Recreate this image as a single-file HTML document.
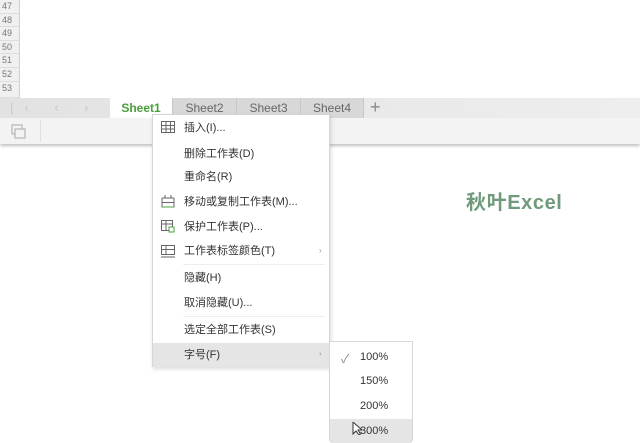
<!DOCTYPE html>
<html><head><meta charset="utf-8"><style>
body{margin:0;width:640px;height:435px;position:relative;overflow:hidden;background:#fff;font-family:"Liberation Sans","Microsoft YaHei","Noto Sans CJK SC",sans-serif;}
.rh{position:absolute;left:0;width:20px;height:13.6px;background:#f0f0f0;border-bottom:1px solid #ddd;border-right:1px solid #cfcfcf;font-size:9px;color:#777;line-height:13px;padding-left:2px;box-sizing:border-box}
.tabbar{position:absolute;left:0;top:98px;width:640px;height:20px;background:linear-gradient(to right,#e2e2e2,#eeeeee)}
.tab{position:absolute;top:98px;height:20px;font-size:12px;line-height:20px;text-align:center;color:#666;background:#d8d8d8;border-left:1px solid #c8c8c8;box-sizing:border-box}
.tool{position:absolute;left:0;top:118px;width:640px;height:26px;background:#f3f3f3;box-shadow:0 2px 3px rgba(0,0,0,.25)}
.menu{position:absolute;left:152px;top:114px;width:178px;height:253px;background:#fff;border:1px solid #d6d6d6;box-shadow:1px 2px 4px rgba(0,0,0,.15);box-sizing:border-box}
.it{position:absolute;left:0;width:176px;height:24px;font-size:11px;line-height:24px;color:#333;padding-left:31px;box-sizing:border-box;font-family:"Liberation Sans","Noto Sans CJK SC",sans-serif}
.sep{position:absolute;left:30px;right:4px;height:1px;background:#eee}
.sub{position:absolute;left:329px;top:341px;width:84px;height:100px;background:#fff;border:1px solid #d6d6d6;box-sizing:border-box}
.si{position:absolute;left:0;width:82px;height:24px;font-size:11px;line-height:24px;color:#333;padding-left:30px;box-sizing:border-box}
</style></head><body>
<div class="rh" style="top:0">47</div>
<div class="rh" style="top:13.6px">48</div>
<div class="rh" style="top:27.2px">49</div>
<div class="rh" style="top:40.8px">50</div>
<div class="rh" style="top:54.4px">51</div>
<div class="rh" style="top:68px">52</div>
<div class="rh" style="top:81.6px;height:16.4px">53</div>
<div class="tool"></div>
<svg style="position:absolute;left:10px;top:124px" width="18" height="16" viewBox="0 0 18 16"><rect x="2" y="1" width="10" height="9" fill="none" stroke="#aaa"/><rect x="5" y="5" width="10" height="9" fill="#f3f3f3" stroke="#aaa"/></svg>
<div style="position:absolute;left:40px;top:120px;width:1px;height:22px;background:#e0e0e0"></div>
<div class="tabbar"></div>
<div style="position:absolute;left:10px;top:98px;font-size:13px;line-height:20px;color:#c8c8c8;letter-spacing:11px">|‹ ‹ › ›|</div>
<div class="tab" style="left:110px;width:62px;background:#fff;border:none;color:#4aa03c;font-weight:bold">Sheet1</div>
<div class="tab" style="left:172px;width:64px">Sheet2</div>
<div class="tab" style="left:236px;width:64px">Sheet3</div>
<div class="tab" style="left:300px;width:64px;border-right:1px solid #c8c8c8">Sheet4</div>
<div style="position:absolute;left:370px;top:96px;font-size:18px;color:#888;line-height:22px">+</div>
<div style="position:absolute;left:466px;top:186px;font-size:20px;letter-spacing:0.6px;font-weight:bold;color:#6f9a7c;font-family:'Liberation Sans','Noto Sans CJK SC',sans-serif">秋叶Excel</div>
<div class="menu">
<svg style="position:absolute;left:8px;top:6px" width="14" height="12"><rect x="0.5" y="0.5" width="13" height="11" fill="none" stroke="#666"/><path d="M0 4.5H14M0 8H14M5 0V12M9.5 0V12" stroke="#666"/></svg>
<div class="it" style="top:1px">插入(I)...</div>
<div class="it" style="top:27px">删除工作表(D)</div>
<div class="it" style="top:50px">重命名(R)</div>
<svg style="position:absolute;left:8px;top:80px" width="14" height="13"><path d="M1 3H13M1 3V12H13V3M1 7.5H13M4 0V3M10 0V3" fill="none" stroke="#666"/><path d="M1 12H13" stroke="#4aa03c"/></svg>
<div class="it" style="top:75px">移动或复制工作表(M)...</div>
<svg style="position:absolute;left:8px;top:105px" width="14" height="13"><rect x="0.5" y="0.5" width="11" height="10" fill="none" stroke="#666"/><path d="M0 4H12M5 0V11" stroke="#666"/><rect x="8" y="7" width="5" height="5" fill="#fff" stroke="#4aa03c"/></svg>
<div class="it" style="top:100px">保护工作表(P)...</div>
<svg style="position:absolute;left:8px;top:130px" width="14" height="13"><rect x="0.5" y="0.5" width="13" height="9" fill="none" stroke="#666"/><path d="M0 4.5H14M5 0V10M0 12H14" stroke="#666"/></svg>
<div class="it" style="top:124px">工作表标签颜色(T)</div>
<div style="position:absolute;left:166px;top:131px;font-size:8px;color:#999">›</div>
<div class="sep" style="top:149px"></div>
<div class="it" style="top:151px">隐藏(H)</div>
<div class="it" style="top:176px">取消隐藏(U)...</div>
<div class="sep" style="top:201px"></div>
<div class="it" style="top:203px">选定全部工作表(S)</div>
<div class="it" style="top:228px;background:#e5e5e5">字号(F)</div>
<div style="position:absolute;left:166px;top:234px;font-size:8px;color:#999">›</div>
</div>
<div class="sub">
<div style="position:absolute;left:11px;top:8px;font-size:12px;color:#888">✓</div>
<div class="si" style="top:3px">100%</div>
<div class="si" style="top:27px">150%</div>
<div class="si" style="top:52px">200%</div>
<div class="si" style="top:77px;background:#e5e5e5">300%</div>
</div>
<svg style="position:absolute;left:352px;top:422px" width="10" height="13"><path d="M1 0V12L4 9L7 13L8.5 12L6 8H10Z" fill="#fff" stroke="#333"/></svg>
</body></html>
